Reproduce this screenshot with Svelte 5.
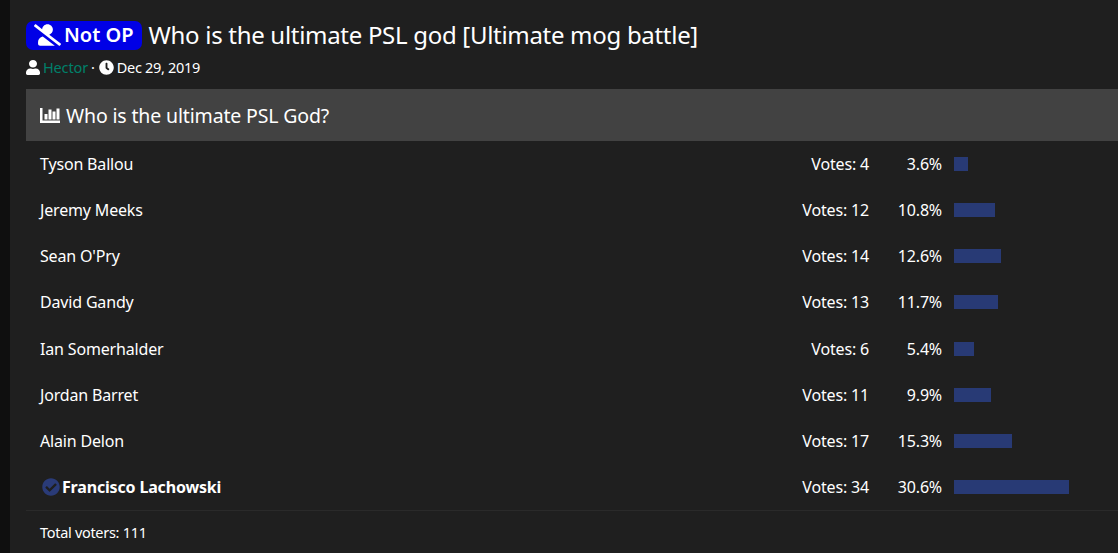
<script>
	const options = [
		{ name: 'Tyson Ballou', votes: 4, pct: 3.6 },
		{ name: 'Jeremy Meeks', votes: 12, pct: 10.8 },
		{ name: "Sean O'Pry", votes: 14, pct: 12.6 },
		{ name: 'David Gandy', votes: 13, pct: 11.7 },
		{ name: 'Ian Somerhalder', votes: 6, pct: 5.4 },
		{ name: 'Jordan Barret', votes: 11, pct: 9.9 },
		{ name: 'Alain Delon', votes: 17, pct: 15.3 },
		{ name: 'Francisco Lachowski', votes: 34, pct: 30.6, voted: true }
	];
</script>

<div class="page">
	<main class="content">
		<h1 class="title">
			<span class="badge">
				<svg class="slash-icon" viewBox="0 0 640 512" aria-hidden="true"><path d="M633.8 458.1L362.3 248.3C412.1 230.7 448 183.8 448 128 448 57.3 390.7 0 320 0c-67.1 0-121.5 51.8-126.9 117.4L45.5 3.4C38.5-2 28.5-.8 23 6.2L3.4 31.4c-5.4 7-4.2 17 2.8 22.4l588.4 454.7c7 5.4 17 4.2 22.5-2.8l19.6-25.3c5.4-6.8 4.1-16.9-2.9-22.3zM96 422.4V464c0 26.5 21.5 48 48 48h350.2L207.4 290.3C144.2 301.3 96 356 96 422.4z"/></svg>
				Not OP
			</span>
			Who is the ultimate PSL god [Ultimate mog battle]
		</h1>
		<div class="meta">
			<svg class="user-icon" viewBox="0 0 448 512" preserveAspectRatio="none" aria-hidden="true"><path d="M224 256c70.7 0 128-57.3 128-128S294.7 0 224 0 96 57.3 96 128s57.3 128 128 128zm89.6 32h-16.7c-22.2 10.2-46.9 16-72.9 16s-50.6-5.8-72.9-16h-16.7C60.2 288 0 348.2 0 422.4V464c0 26.5 21.5 48 48 48h352c26.5 0 48-21.5 48-48v-41.6c0-74.2-60.2-134.4-134.4-134.4z"/></svg>
			<span class="author">Hector</span>
			<span class="sep">·</span>
			<svg class="clock-icon" viewBox="0 0 512 512" aria-hidden="true"><path d="M256,8C119,8,8,119,8,256S119,504,256,504,504,393,504,256,393,8,256,8Zm92.49,313h0l-20,25a16,16,0,0,1-22.49,2.5h0l-67-49.72a40,40,0,0,1-15-31.23V112a16,16,0,0,1,16-16h32a16,16,0,0,1,16,16V256l58,42.5A16,16,0,0,1,348.49,321Z"/></svg>
			<span class="date">Dec 29, 2019</span>
		</div>

		<section class="poll">
			<h2 class="poll-head">
				<svg class="chart-icon" viewBox="0 0 20 15" aria-hidden="true">
					<path d="M0 0h2.5v12.5H20V15H0z"/>
					<rect x="4.5" y="6" width="3" height="5.5"/>
					<rect x="8.5" y="1.5" width="3" height="10"/>
					<rect x="12.5" y="3.5" width="3" height="8"/>
					<rect x="16.5" y="0.5" width="3" height="11"/>
				</svg>
				Who is the ultimate PSL God?
			</h2>
			<ul class="rows">
				{#each options as opt}
					<li class="row">
						<span class="name" class:voted={opt.voted}>
							{#if opt.voted}
								<svg class="check" viewBox="0 0 512 512" aria-hidden="true"><path d="M504 256c0 136.967-111.033 248-248 248S8 392.967 8 256 119.033 8 256 8s248 111.033 248 248zM227.314 387.314l184-184c6.248-6.248 6.248-16.379 0-22.627l-22.627-22.627c-6.248-6.249-16.379-6.249-22.628 0L216 308.118l-70.059-70.059c-6.248-6.248-16.379-6.248-22.628 0l-22.627 22.627c-6.248 6.248-6.248 16.379 0 22.627l104 104c6.249 6.25 16.379 6.25 22.628.001z"/></svg>
							{/if}
							{opt.name}
						</span>
						<span class="votes">Votes: {opt.votes}</span>
						<span class="pct">{opt.pct}%</span>
						<span class="bar-cell"><span class="bar" style="width: {opt.pct * 3.76}px"></span></span>
					</li>
				{/each}
			</ul>
			<div class="total">Total voters: 111</div>
		</section>
	</main>
</div>

<style>
	:global(body) {
		margin: 0;
		background: #1f1f1f;
		overflow: hidden;
	}

	.page {
		height: 553px;
		padding-left: 10px;
		background: #0f0f0f;
		font-family: "Noto Sans", "Open Sans", sans-serif;
		color: #fff;
		overflow: hidden;
	}

	.content {
		height: 100%;
		background: #1f1f1f;
		padding: 19px 0 0 16px;
		box-sizing: border-box;
	}

	.title {
		display: flex;
		align-items: center;
		gap: 7px;
		margin: 0;
		font-size: 24px;
		font-weight: 400;
		line-height: 32px;
		white-space: nowrap;
		letter-spacing: -0.3px;
	}

	.badge {
		display: inline-flex;
		align-items: center;
		gap: 3px;
		height: 29px;
		padding: 0 8px;
		border-radius: 7px;
		background: #0000e6;
		font-size: 20px;
		font-weight: 600;
		letter-spacing: 0;
	}

	.slash-icon {
		width: 27px;
		height: 22px;
		fill: #fff;
	}

	.meta {
		display: flex;
		align-items: center;
		gap: 3px;
		height: 20px;
		margin-top: 6px;
		font-size: 14.5px;
		letter-spacing: -0.15px;
	}

	.user-icon {
		width: 14px;
		height: 15px;
		fill: #fff;
	}

	.clock-icon {
		width: 15px;
		height: 15px;
		fill: #fff;
	}

	.author {
		color: #00806a;
	}

	.sep {
		margin-right: 1px;
	}

	.date {
		letter-spacing: -0.3px;
	}

	.poll {
		margin-top: 12px;
	}

	.poll-head {
		display: flex;
		align-items: center;
		gap: 6px;
		height: 52px;
		margin: 0;
		padding-left: 14px;
		background: #424242;
		font-size: 19.5px;
		font-weight: 400;
		letter-spacing: -0.15px;
	}

	.chart-icon {
		width: 20px;
		height: 15px;
		fill: #fff;
	}

	.rows {
		list-style: none;
		margin: 0;
		padding: 0;
		border-bottom: 1px solid #2a2a2a;
	}

	.row {
		display: grid;
		grid-template-columns: 1fr 90px 73px 176px;
		align-items: center;
		height: 46.14px;
		padding-left: 14px;
		font-size: 16px;
		letter-spacing: -0.17px;
	}

	.name.voted {
		display: flex;
		align-items: center;
		gap: 2px;
		margin-left: 2px;
		font-weight: 700;
	}

	.check {
		width: 18px;
		height: 18px;
		fill: #2a3b78;
	}

	.votes,
	.pct {
		text-align: right;
	}

	.bar-cell {
		padding-left: 12px;
		display: block;
	}

	.bar {
		display: block;
		height: 14px;
		background: #283a75;
	}

	.total {
		padding: 11px 0 0 14px;
		font-size: 14.5px;
		letter-spacing: -0.3px;
	}
</style>
